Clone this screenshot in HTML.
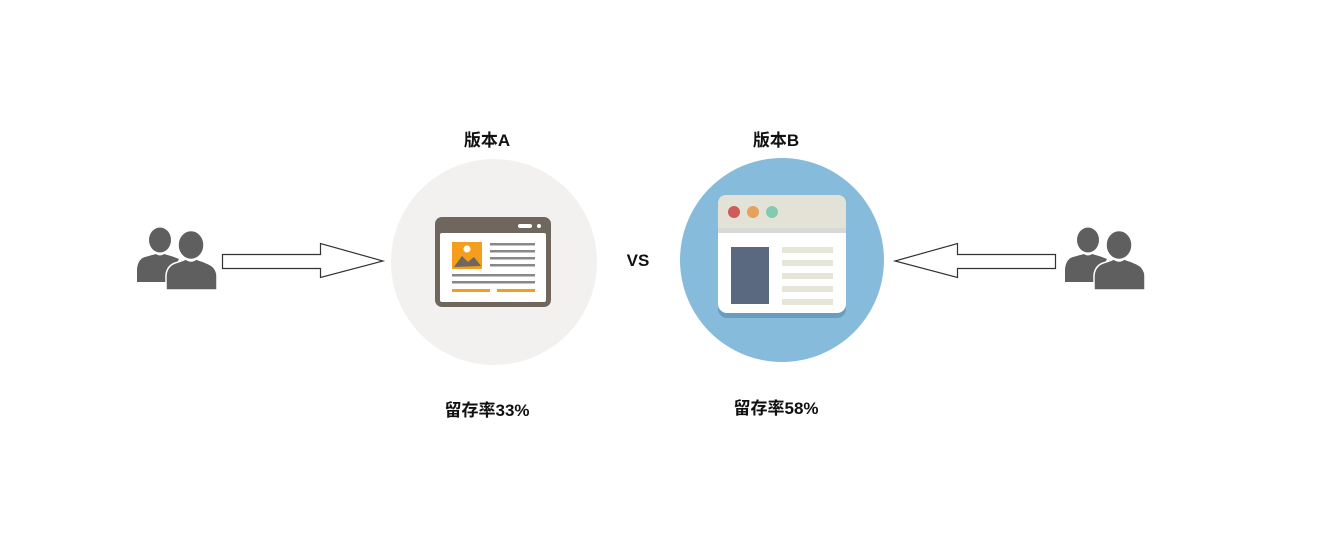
<!DOCTYPE html>
<html><head><meta charset="utf-8"><style>
body{margin:0;width:1332px;height:534px;background:#fff;position:relative;overflow:hidden;font-family:"Liberation Sans","Noto Sans CJK SC",sans-serif;font-weight:bold;color:#111}
.t{position:absolute;font-size:17px;transform:translateX(-50%);white-space:nowrap}
svg{position:absolute;left:0;top:0}
</style></head><body>
<svg width="1332" height="534" viewBox="0 0 1332 534">
<defs>
<g id="ppl">
<ellipse cx="23" cy="11" rx="11" ry="12.5" fill="#5f5f5f"/>
<path d="M0 53 L0 40 Q1 30 8 28 Q15 26 19 25 Q23 28 27 25 Q35 27 42 30 L30 53 Z" fill="#5f5f5f"/>
<ellipse cx="54" cy="16" rx="13" ry="14.5" fill="#5f5f5f" stroke="#fff" stroke-width="1.5"/>
<path d="M29 61 L29 46 Q30 37 38 34 Q45 32 49 30 Q54 34 59 30 Q66 32 72 35 Q79 38 80 46 L80 61 Z" fill="#5f5f5f" stroke="#fff" stroke-width="1.5"/>
</g>
</defs>
<use href="#ppl" x="137" y="229"/>
<use href="#ppl" x="1065" y="229"/>
<path d="M222.5 254.5 H320.5 V243.5 L383 261 L320.5 277.5 V268.5 H222.5 Z" fill="#fff" stroke="#333" stroke-width="1.2"/>
<path d="M1055.5 254.5 H957.5 V243.5 L895 261 L957.5 277.5 V268.5 H1055.5 Z" fill="#fff" stroke="#333" stroke-width="1.2"/>
<circle cx="494" cy="262" r="103" fill="#f2f1ef"/>
<rect x="435" y="217" width="116" height="90" rx="7" fill="#6f665e"/>
<rect x="440" y="233" width="106" height="69" rx="2" fill="#fff"/>
<rect x="518" y="224" width="14" height="4" rx="2" fill="#fff"/>
<rect x="537" y="224" width="4" height="4" rx="2" fill="#fff"/>
<rect x="452" y="242" width="30" height="27" fill="#f59d1c"/>
<circle cx="467" cy="249" r="3.5" fill="#fff"/>
<path d="M454 267 L462 256 L468 262 L474 257 L481 266 Z" fill="#6f665e"/>
<g fill="#888">
<rect x="490" y="243" width="45" height="2.5"/><rect x="490" y="250" width="45" height="2.5"/><rect x="490" y="257" width="45" height="2.5"/><rect x="490" y="264" width="45" height="2.5"/>
<rect x="452" y="274" width="83" height="2.5"/><rect x="452" y="281" width="83" height="2.5"/>
</g>
<rect x="452" y="289" width="38" height="3" fill="#f59d1c"/><rect x="497" y="289" width="38" height="3" fill="#f59d1c"/>
<circle cx="782" cy="260" r="102" fill="#87bbdb"/>
<rect x="718" y="201" width="128" height="117" rx="9" fill="#6b9dbf"/>
<rect x="718" y="195" width="128" height="118" rx="9" fill="#fff"/>
<path d="M718 228 V204 Q718 195 727 195 H837 Q846 195 846 204 V228 Z" fill="#e3e2d6"/>
<rect x="718" y="228" width="128" height="5" fill="#d8d9d6"/>
<circle cx="734" cy="212" r="6" fill="#cf5b5b"/>
<circle cx="753" cy="212" r="6" fill="#e6a15a"/>
<circle cx="772" cy="212" r="6" fill="#86c9b2"/>
<rect x="731" y="247" width="38" height="57" fill="#5a6880"/>
<g fill="#e5e5d8">
<rect x="782" y="247" width="51" height="6"/><rect x="782" y="260" width="51" height="6"/><rect x="782" y="273" width="51" height="6"/><rect x="782" y="286" width="51" height="6"/><rect x="782" y="299" width="51" height="6"/>
</g>
</svg>
<div class="t" style="left:487px;top:126px">版本A</div>
<div class="t" style="left:776px;top:126px">版本B</div>
<div class="t" style="left:638px;top:251px">VS</div>
<div class="t" style="left:487px;top:396px">留存率33%</div>
<div class="t" style="left:776px;top:394px">留存率58%</div>
</body></html>
